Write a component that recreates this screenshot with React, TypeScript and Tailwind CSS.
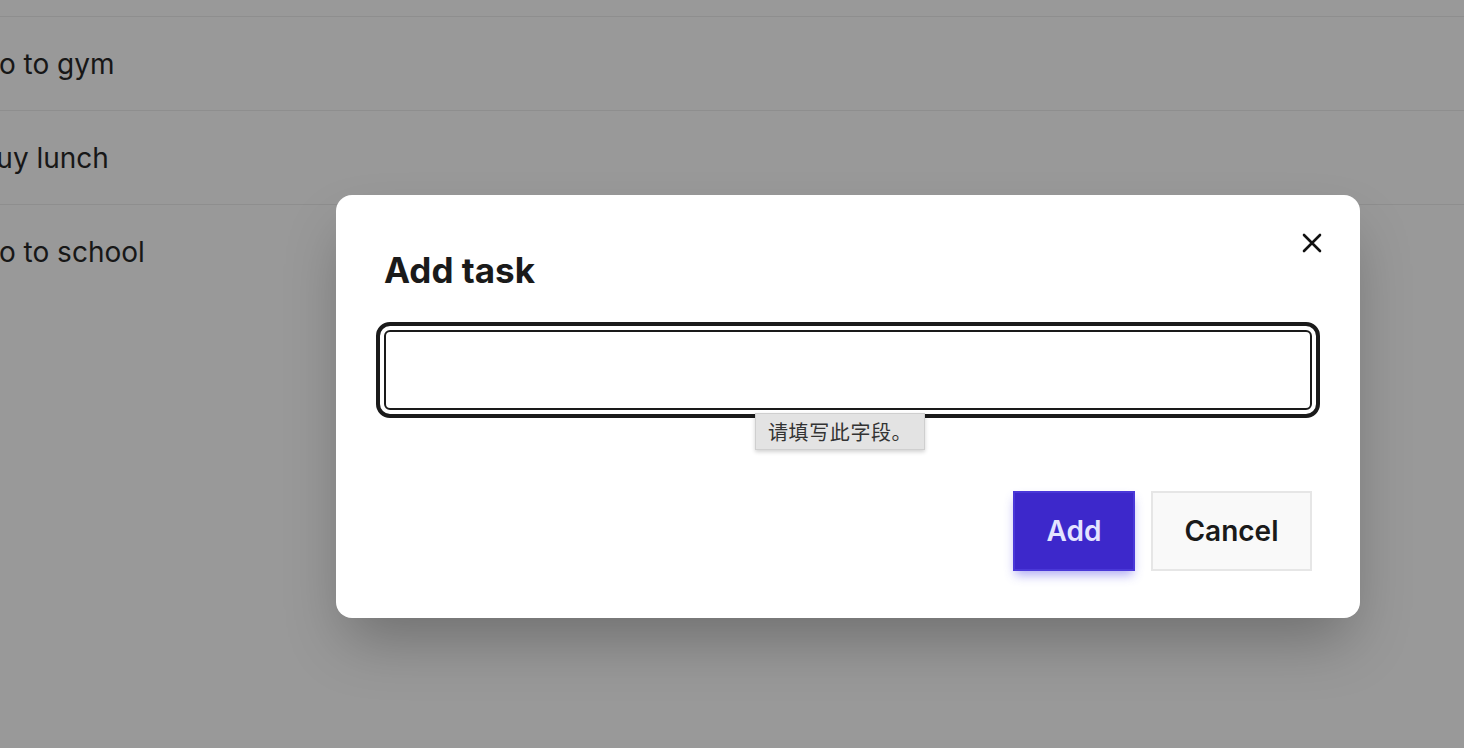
import { useState } from "react";

const tasks = ["Wake up early", "Go to gym", "Buy lunch", "Go to school"];

export default function App() {
  const [value, setValue] = useState("");

  return (
    <div
      className="relative h-[748px] w-full overflow-hidden bg-[#999999]"
      style={{ fontFamily: "Inter, 'Noto Sans', sans-serif" }}
    >
      {/* Task list behind the overlay */}
      <ul className="-mt-[77px] -ml-[22px] flex flex-col divide-y divide-[#8e8e8e]">
        {tasks.map((task) => (
          <li
            key={task}
            className="flex h-[94px] items-center text-[28px] text-[#171717]"
          >
            {task}
          </li>
        ))}
      </ul>

      {/* Modal */}
      <div className="absolute left-[336px] top-[195px] flex w-[1024px] flex-col rounded-2xl bg-white px-12 pb-[47px] pt-[53px] shadow-[0_30px_60px_-10px_rgba(0,0,0,0.28)]">
        <button className="absolute right-[38px] top-[38px] flex h-[20px] w-[20px] items-center justify-center text-[#111]">
          <svg width="20" height="20" viewBox="0 0 20 20" fill="none">
            <path
              d="M2 2L18 18M18 2L2 18"
              stroke="currentColor"
              strokeWidth="2.6"
              strokeLinecap="round"
            />
          </svg>
        </button>

        <h2 className="text-[35px] font-bold leading-[45px] text-[#1a1a1a]">
          Add task
        </h2>

        <div className="relative mt-[37px]">
          <input
            value={value}
            onChange={(e) => setValue(e.target.value)}
            className="block h-[80px] w-full rounded-md border-2 border-[#1a1a1a] px-4 text-[26px] outline-4 outline-offset-4 outline-[#1a1a1a]"
          />
          <div
            className="absolute left-[371px] top-[83px] flex h-[37px] items-center border border-[#cfcfcf] bg-[#e3e3e3] px-[12px] text-[20px] tracking-[0.6px] text-[#333] shadow-[0_2px_4px_rgba(0,0,0,0.18)]"
            style={{ fontFamily: "'Noto Sans CJK SC', sans-serif" }}
          >
            请填写此字段。
          </div>
        </div>

        <div className="mt-[81px] flex justify-end gap-4">
          <button className="h-[80px] w-[122px] border-2 border-[#4a38d8] bg-[#3d28cb] text-[28px] font-semibold text-[#e4e4ff] shadow-[0_6px_10px_-2px_rgba(79,70,229,0.45)]">
            Add
          </button>
          <button className="h-[80px] w-[161px] border-2 border-[#e6e6e6] bg-[#f9f9f9] text-[28px] font-semibold text-[#1a1a1a]">
            Cancel
          </button>
        </div>
      </div>
    </div>
  );
}
